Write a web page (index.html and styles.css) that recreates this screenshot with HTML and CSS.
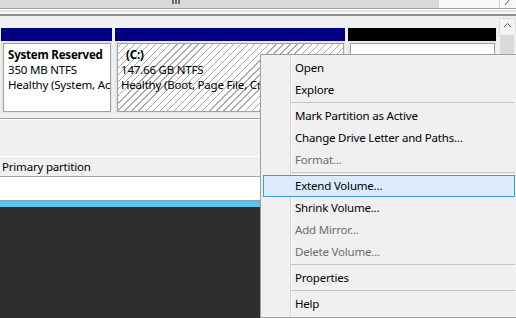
FILE: index.html
```html
<!DOCTYPE html>
<html lang="en">
<head>
    <meta charset="UTF-8">
    <meta name="viewport" content="width=device-width, initial-scale=1.0">
    <title>Disk Management</title>
    <link rel="stylesheet" href="styles.css">
</head>
<body>
    <!-- Volume list scrollbar (bottom of upper pane) -->
    <div class="hscroll">
        <div class="hscroll-thumb"><span class="grip"></span></div>
        <div class="hscroll-track"></div>
        <div class="hscroll-btn">
            <svg width="16" height="8" viewBox="0 0 16 8"><polyline points="5,5 9,0 5,-5" fill="none" stroke="#606060" stroke-width="1"/></svg>
        </div>
    </div>
    <div class="splitter"></div>

    <!-- Disk view -->
    <div class="disk-pane">
        <div class="disk-area">
            <div class="disk-row">
                <div class="part part-sys">
                    <div class="part-head"></div>
                    <div class="part-body">
                        <div class="part-box">
                            <div class="vol-name">System Reserved</div>
                            <div>350 MB NTFS</div>
                            <div>Healthy (System, Active, Primary Partition)</div>
                        </div>
                    </div>
                </div>
                <div class="part part-c">
                    <div class="part-head"></div>
                    <div class="part-body">
                        <div class="part-box hatched">
                            <div class="vol-name indent">(C:)</div>
                            <div>147.66 GB NTFS</div>
                            <div>Healthy (Boot, Page File, Crash Dump, Primary Partition)</div>
                        </div>
                    </div>
                </div>
                <div class="part part-free">
                    <div class="part-head"></div>
                    <div class="part-body">
                        <div class="part-box"></div>
                    </div>
                </div>
            </div>
            <div class="legend">Primary partition</div>
        </div>
        <div class="vscroll">
            <div class="vscroll-btn">
                <svg width="15" height="13" viewBox="0 0 15 13"><polyline points="4,8 7.5,4.5 11,8" fill="none" stroke="#606060" stroke-width="1"/></svg>
            </div>
            <div class="vscroll-thumb"></div>
        </div>
    </div>
    <div class="status"></div>
    <div class="taskbar"></div>

    <!-- Context menu for (C:) -->
    <div class="menu">
        <div class="menu-item">Open</div>
        <div class="menu-item">Explore</div>
        <div class="menu-sep"></div>
        <div class="menu-item">Mark Partition as Active</div>
        <div class="menu-item">Change Drive Letter and Paths...</div>
        <div class="menu-item disabled">Format...</div>
        <div class="menu-sep"></div>
        <div class="menu-item active">Extend Volume...</div>
        <div class="menu-item">Shrink Volume...</div>
        <div class="menu-item disabled">Add Mirror...</div>
        <div class="menu-item disabled">Delete Volume...</div>
        <div class="menu-sep"></div>
        <div class="menu-item">Properties</div>
        <div class="menu-sep"></div>
        <div class="menu-item">Help</div>
    </div>
</body>
</html>
```

FILE: styles.css
```css
body {
    margin: 0;
    width: 516px;
    height: 318px;
    overflow: hidden;
    position: relative;
    background-color: #f0f0f0;
    font-family: "Noto Sans", "DejaVu Sans", sans-serif;
    font-size: 11.5px;
    letter-spacing: -0.2px;
    color: #000;
}
/* Upper pane scrollbar */
.hscroll {
    display: flex;
    height: 8px;
}
.hscroll-thumb {
    width: 439px;
    display: flex;
    background-color: #dadada;
}
.grip {
    margin-left: 172px;
    width: 8px;
    height: 4px;
    background: repeating-linear-gradient(to right, #6a6a6a 0 2px, transparent 2px 3px);
}
.hscroll-track {
    flex: 1;
    background-color: #f8f8f8;
}
.hscroll-btn {
    width: 16px;
    border-left: 1px solid #d4d4d4;
    background-color: #f8f8f8;
}
.hscroll-btn svg {
    display: block;
}
.splitter {
    height: 8px;
    background: linear-gradient(to bottom, #a0a0a0 0 1px, #fff 1px 2px, #e4e4e4 2px 4px, #fafafa 4px 6px, #8c8c8c 6px 8px);
}
/* Disk pane */
.disk-pane {
    display: flex;
    height: 161px;
}
.disk-area {
    flex: 1;
    display: flex;
    flex-direction: column;
}
.disk-row {
    display: flex;
    gap: 3px;
    margin-top: 12px;
    padding: 0 0 5px 1px;
    border-bottom: 1px solid #a0a0a0;
    box-shadow: 0 1px 0 #fff;
}
.part-sys {
    width: 111px;
}
.part-c {
    width: 230px;
}
.part-free {
    width: 148px;
}
.part-head {
    height: 13px;
    background-color: #000080;
}
.part-free .part-head {
    background-color: #000;
}
.part-body {
    height: 72px;
    padding: 2px 1px 1px 2px;
    box-sizing: border-box;
    background-color: #e6e6e6;
}
.part-box {
    height: 100%;
    box-sizing: border-box;
    border: 1px solid #a0a0a0;
    background-color: #fff;
    padding: 3px 3px;
    white-space: nowrap;
    overflow: hidden;
}
.part-box div {
    height: 15px;
    line-height: 15px;
}
.part-sys .part-box {
    padding-left: 4px;
}
.hatched {
    background: repeating-linear-gradient(-45deg, #fff 0 4px, #ababab 4px 5px);
}
.vol-name {
    font-weight: bold;
}
.indent {
    padding-left: 5px;
}
.legend {
    margin-top: auto;
    height: 19px;
    line-height: 19px;
    padding-left: 2px;
    border-top: 1px solid #fff;
    border-bottom: 1px solid #a0a0a0;
}
.vscroll {
    width: 17px;
    padding-top: 2px;
    display: flex;
    flex-direction: column;
}
.vscroll-btn {
    height: 15px;
    border: 1px solid #dedede;
    border-bottom: none;
    background-color: #f4f4f4;
}
.vscroll-btn svg {
    display: block;
}
.vscroll-thumb {
    flex: 1;
    margin: 1px 2px 0 1px;
    background-color: #dadada;
}
.status {
    height: 23px;
    background-color: #fff;
}
.taskbar {
    height: 118px;
    background: linear-gradient(to bottom, #88a5ba 0 2px, #5cc4e6 2px 7px, #2e2e2e 7px);
}
/* Context menu */
.menu {
    position: absolute;
    left: 260px;
    top: 54px;
    width: 252px;
    padding: 2px;
    border: 1px solid #a0a0a0;
    background: #f0f0f0 linear-gradient(to right, transparent 29px, #d4d4d4 29px 30px, #fcfcfc 30px 31px, transparent 31px) no-repeat;
}
.menu-item {
    height: 20px;
    line-height: 20px;
    padding-left: 31px;
    border: 1px solid transparent;
}
.menu-item.disabled {
    color: #6d6d6d;
}
.menu-item.active {
    background-color: #dbebfb;
    border-color: #3c9dd8;
}
.menu-sep {
    height: 1px;
    margin: 1px 0 2px 28px;
    background-color: #c6c6c6;
}
```
